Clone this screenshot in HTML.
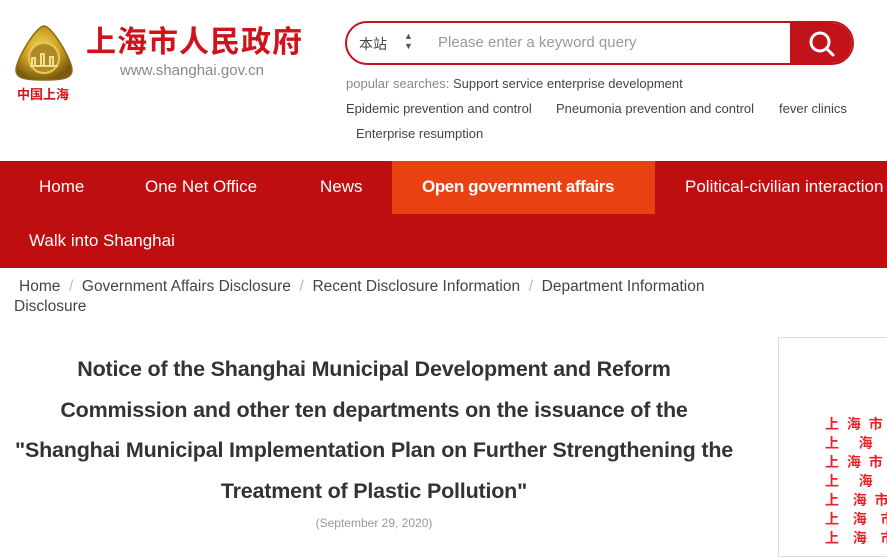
<!DOCTYPE html>
<html><head><meta charset="utf-8"><style>
*{margin:0;padding:0;box-sizing:border-box}
body{width:887px;height:549px;overflow:hidden;background:#fff;font-family:"Liberation Sans","Noto Sans CJK SC",sans-serif;position:relative;color:#333}
.a{position:absolute;white-space:nowrap}
.nav{position:absolute;left:0;top:161px;width:887px;height:107px;background:#be0e10}
.nav .a{color:#fff;font-size:17px}
</style></head><body>
<svg class="a" style="left:12px;top:24px" width="64" height="58" viewBox="0 0 64 58">
<defs><radialGradient id="g" cx="45%" cy="40%" r="60%"><stop offset="0" stop-color="#f3d65a"/><stop offset="0.6" stop-color="#c79a1e"/><stop offset="1" stop-color="#7a5a10"/></radialGradient></defs>
<path d="M32 2 C40 2 60 36 60 46 C60 54 52 56 32 56 C12 56 4 54 4 46 C4 36 24 2 32 2Z" fill="url(#g)" stroke="#8a6a10" stroke-width="1.5"/>
<circle cx="32" cy="34" r="15" fill="#b08a2a" stroke="#e8c850" stroke-width="2"/>
<path d="M20 42 V34 H23 V42 M29 42 V30 H32 V42 M38 42 V33 H41 V42 M18 42 H46" stroke="#f5e08a" stroke-width="2" fill="none"/>
</svg>
<div class="a" style="left:17px;top:84px;font-size:13px;font-weight:bold;color:#d2121a">中国上海</div>
<div class="a" style="left:86px;top:23px;font-size:30px;font-weight:bold;color:#d2121a;letter-spacing:1px;line-height:40px">上海市人民政府</div>
<div class="a" style="left:120px;top:62px;font-size:15px;color:#888">www.shanghai.gov.cn</div>
<div class="a" style="left:345px;top:21px;width:509px;height:44px;border:2px solid #c2121a;border-radius:22px;overflow:hidden">
<div class="a" style="left:12px;top:11px;font-size:14px;color:#444">本站</div>
<div class="a" style="left:57px;top:8px;font-size:9px;color:#555;line-height:10px">▲<br>▼</div>
<div class="a" style="left:91px;top:11px;font-size:15px;color:#999">Please enter a keyword query</div>
<div class="a" style="left:443px;top:0;width:64px;height:40px;background:#c2121a">
<svg style="position:absolute;left:18px;top:7px" width="28" height="28" viewBox="0 0 28 28"><circle cx="12" cy="12" r="9" fill="none" stroke="#fff" stroke-width="3"/><path d="M18.5 18.5 L25 25" stroke="#fff" stroke-width="3" stroke-linecap="round"/></svg>
</div></div>
<div class="a" style="left:346px;top:76px;font-size:13px;color:#888">popular searches: <span style="color:#444">Support service enterprise development</span></div>
<div class="a" style="left:346px;top:101px;font-size:13px;color:#444">Epidemic prevention and control</div>
<div class="a" style="left:556px;top:101px;font-size:13px;color:#444">Pneumonia prevention and control</div>
<div class="a" style="left:779px;top:101px;font-size:13px;color:#444">fever clinics</div>
<div class="a" style="left:356px;top:126px;font-size:13px;color:#444">Enterprise resumption</div>
<div class="nav">
<div class="a" style="left:392px;top:0;width:263px;height:53px;background:#ea4112"></div>
<div class="a" style="left:39px;top:16px">Home</div>
<div class="a" style="left:145px;top:16px">One Net Office</div>
<div class="a" style="left:320px;top:16px">News</div>
<div class="a" style="left:422px;top:16px;font-weight:bold;letter-spacing:-0.4px">Open government affairs</div>
<div class="a" style="left:685px;top:16px">Political-civilian interaction</div>
<div class="a" style="left:29px;top:70px">Walk into Shanghai</div>
</div>
<div class="a" style="left:19px;top:278px;font-size:15.5px;color:#444">Home <span style="color:#bbb">&nbsp;/&nbsp;</span> Government Affairs Disclosure <span style="color:#bbb">&nbsp;/&nbsp;</span> Recent Disclosure Information <span style="color:#bbb">&nbsp;/&nbsp;</span> Department Information</div>
<div class="a" style="left:14px;top:298px;font-size:15.5px;color:#444">Disclosure</div>
<div class="a" style="left:0;top:349px;width:748px;text-align:center;font-size:21.5px;font-weight:bold;color:#333;line-height:40.5px;white-space:normal;letter-spacing:-0.2px">Notice of the Shanghai Municipal Development and Reform<br>Commission and other ten departments on the issuance of the<br>"Shanghai Municipal Implementation Plan on Further Strengthening the<br>Treatment of Plastic Pollution"</div>
<div class="a" style="left:0;top:516px;width:748px;text-align:center;font-size:12px;color:#999">(September 29, 2020)</div>
<div class="a" style="left:778px;top:337px;width:120px;height:220px;border:1px solid #ddd;background:#fff"></div>
<div class="a" style="left:825px;top:415px;font-size:14px;font-weight:bold;color:#e8232a;line-height:19px;letter-spacing:2px">上 海 市<br>上 &nbsp;&nbsp;海<br>上 海 市 纟<br>上 &nbsp;&nbsp;海<br>上 &nbsp;海 市<br>上 &nbsp;海 &nbsp;市<br>上 &nbsp;海 &nbsp;市</div>
</body></html>
